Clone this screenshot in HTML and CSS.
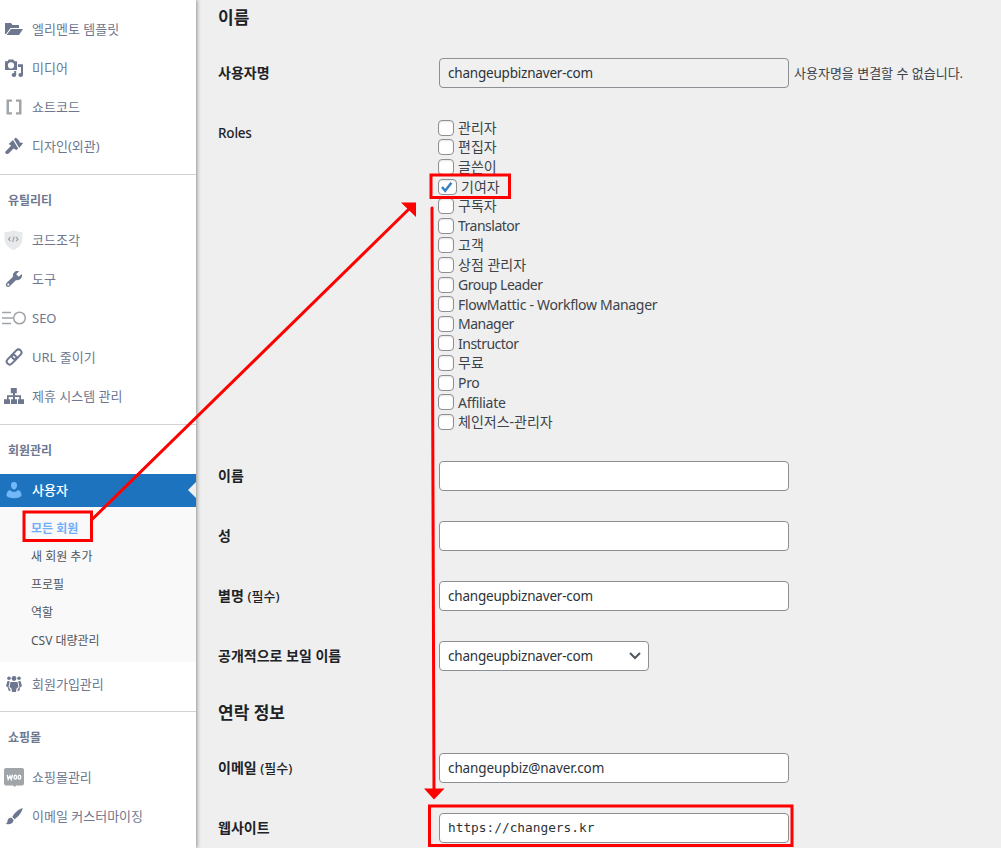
FILE: index.html
```html
<!DOCTYPE html>
<html lang="ko">
<head>
<meta charset="utf-8">
<title>사용자 편집</title>
<link rel="stylesheet" href="styles.css">
</head>
<body>
<div class="app">
  <nav class="sidebar">
    <ul class="menu menu-first">
      <li class="item"><svg class="icon" viewBox="0 0 20 20"><path d="M1 15V4h6l1.500 2H15v3H6.500L2 15zM2.500 16 7 10h12l-4 6z"/></svg><span>엘리멘토 템플릿</span></li>
      <li class="item"><svg class="icon" viewBox="0 0 20 20"><path fill-rule="evenodd" d="M1 3.200h2.500L4.800 1.500h4.400l1.300 1.700H13V12H1zM7 4.300a3.100 3.100 0 1 0 0 6.200 3.100 3.100 0 0 0 0-6.200z"/><path d="M14 6.300h5V17h-2V9h-3zM10.200 13h2v4h-2z"/><ellipse cx="9.900" cy="17" rx="2.300" ry="1.900"/><ellipse cx="16.700" cy="17" rx="2.300" ry="1.900"/></svg><span>미디어</span></li>
      <li class="item"><svg class="icon gray" viewBox="0 0 20 20"><path d="M2.500 2.500H8v2.300H5v10.400h3v2.300H2.500zM17.500 2.500H12v2.300h3v10.400h-3v2.300h5.500z"/></svg><span>쇼트코드</span></li>
      <li class="item"><svg class="icon" viewBox="0 0 20 20"><path d="M10 3.300 11.800 1.500 15 4.600l.8 1.800 3.400.6-4 5zM9 4l5.200 8.500-1.700 1.500-3-1.500-4.800 4.900c-1.500 1.500-4.600 0-3.200-1.800L7.200 9.500 4.700 8z"/></svg><span>디자인(외관)</span></li>
    </ul>
    <section class="group">
      <h3 class="group-title">유틸리티</h3>
      <ul class="menu">
        <li class="item"><svg class="icon shield" viewBox="0 0 20 20"><path fill="#e8e9ea" d="M9.500 0C12 1.500 15 2 18.500 2v7c0 5-4 9-9 11-5-2-9-6-9-11V2C4 2 7 1.500 9.500 0z"/><path class="line thin" d="M6.500 7 4.500 9.200l2 2M12 7l2 2.200-2 2M10.200 6.500l-1.500 5.500"/></svg><span>코드조각</span></li>
        <li class="item"><svg class="icon" viewBox="0 0 20 20"><path d="M16.700 9.800c-1.300 1.300-3 1.600-4.600 1.100L6 17c-1 1.200-2.500 1.200-3.500.3-1-1-1-2.500.2-3.600l6.300-5.900C8.600 6.200 9 4.600 10.100 3.400c1.300-1.300 3.300-1.700 5-1.100l-2.900 2.900 2.500 2.600L17.700 5c.6 1.600.3 3.500-1 4.800zM4.300 14.500a1.100 1.100 0 1 0 0 2.200 1.100 1.100 0 0 0 0-2.200z" fill-rule="evenodd"/></svg><span>도구</span></li>
        <li class="item"><svg class="icon seo" viewBox="0 0 24 16"><path class="line" d="M0 2.500h9M0 8h11M0 13.500h9"/><circle class="line" cx="17.500" cy="8" r="5.800"/></svg><span>SEO</span></li>
        <li class="item"><svg class="icon" viewBox="0 0 20 20"><g fill="none" stroke="#6e7790" stroke-width="2"><rect x="7.200" y="4.300" width="11" height="6" rx="3" transform="rotate(-45 12.700 7.300)"/><rect x="2" y="9.700" width="11" height="6" rx="3" transform="rotate(-45 7.500 12.700)"/></g></svg><span>URL 줄이기</span></li>
        <li class="item"><svg class="icon" viewBox="0 0 20 20"><path d="M6.800 2h6v5.200H11v2.100h6v3.900h3V18h-6v-4.800h1.300v-2.100H11v2.100h2V18H7v-4.800h2v-2.100H4.700v2.100H6V18H0v-4.800h3V9.300h6V7.200H6.800z"/></svg><span>제휴 시스템 관리</span></li>
      </ul>
    </section>
    <section class="group">
      <h3 class="group-title members">회원관리</h3>
      <div class="item active"><svg class="icon" viewBox="0 0 20 20"><path d="M10 2c2.200 0 3.300 1.600 3 3.800C12.700 8 11.500 9.500 10 9.500S7.300 8 7 5.800C6.700 3.600 7.800 2 10 2zM6 10c1 1.300 2.400 2 4 2s3-.7 4-2c2.500.5 3.500 2.500 3.500 6-2 1.500-4.200 2.200-7.500 2.200S4.500 17.500 2.500 16c0-3.500 1-5.500 3.500-6z"/></svg><span>사용자</span></div>
      <ul class="submenu">
        <li class="current">모든 회원</li>
        <li>새 회원 추가</li>
        <li>프로필</li>
        <li>역할</li>
        <li>CSV 대량관리</li>
      </ul>
      <div class="item signup"><svg class="icon" viewBox="0 0 20 20"><circle cx="10" cy="4.500" r="2.400"/><circle cx="5" cy="4.300" r="1.800"/><circle cx="15" cy="4.300" r="1.800"/><path d="M6.500 8h7l1 5-2 1.500-.5 3.500H8l-.5-3.500-2-1.500zM3.500 7l2.300.3L4.500 13l1.700 2.200.3 2-2-.7-.6-3L2 12zM16.500 7l-2.300.3 1.300 5.700-1.700 2.200-.3 2 2-.7.6-3L18 12z"/></svg><span>회원가입관리</span></div>
    </section>
    <section class="group">
      <h3 class="group-title">쇼핑몰</h3>
      <ul class="menu">
        <li class="item"><svg class="icon" viewBox="0 0 20 20"><path fill="#a0a5aa" d="M2 1h16q2 0 2 2v13.500q0 2-2 2h-6L11 20l-2-1.500H2q-2 0-2-2V3q0-2 2-2z"/><g fill="none" stroke="#fff" stroke-width="1.400"><path d="m3.200 7.800 1 4.500L6 9l1.200 3.300L8.500 7.700"/><ellipse cx="11.300" cy="10.200" rx="1.300" ry="1.900"/><ellipse cx="15.400" cy="10.200" rx="1.300" ry="1.900"/></g></svg><span>쇼핑몰관리</span></li>
        <li class="item"><svg class="icon" viewBox="0 0 20 20"><path d="M18.700 2C15 3 10.500 6.500 8.300 11l2.200 2.200C15 10.500 18 6 18.700 2zM7.500 11.700c-2.500-.3-4 1.300-4 3.300 0 1.500-1 2.500-2 3 3.500.5 8 0 8-4.300z"/></svg><span>이메일 커스터마이징</span></li>
      </ul>
    </section>
  </nav>

  <main class="content">
    <h2 class="title">이름</h2>
    <div class="row"><label>사용자명</label><div class="input disabled">changeupbiznaver-com</div><span class="hint">사용자명을 변결할 수 없습니다.</span></div>
    <div class="row roles"><label class="latin">Roles</label>
      <ul class="checks">
        <li><i class="box"></i><span>관리자</span></li>
        <li><i class="box"></i><span>편집자</span></li>
        <li><i class="box"></i><span>글쓴이</span></li>
        <li><i class="box checked"><svg viewBox="0 0 16 14"><path d="m3 7 3.200 3.800 6.200-8"/></svg></i><span>기여자</span></li>
        <li><i class="box"></i><span>구독자</span></li>
        <li class="en tight"><i class="box"></i><span>Translator</span></li>
        <li><i class="box"></i><span>고객</span></li>
        <li><i class="box"></i><span>상점 관리자</span></li>
        <li class="en tight"><i class="box"></i><span>Group Leader</span></li>
        <li class="en"><i class="box"></i><span>FlowMattic - Workflow Manager</span></li>
        <li class="en tight"><i class="box"></i><span>Manager</span></li>
        <li class="en tight"><i class="box"></i><span>Instructor</span></li>
        <li><i class="box"></i><span>무료</span></li>
        <li class="en"><i class="box"></i><span>Pro</span></li>
        <li class="en"><i class="box"></i><span>Affiliate</span></li>
        <li><i class="box"></i><span>체인저스-관리자</span></li>
      </ul>
    </div>
    <div class="row"><label>이름</label><div class="input"></div></div>
    <div class="row"><label>성</label><div class="input"></div></div>
    <div class="row"><label>별명 <small>(필수)</small></label><div class="input">changeupbiznaver-com</div></div>
    <div class="row"><label>공개적으로 보일 이름</label><div class="input select">changeupbiznaver-com<svg class="chevron" viewBox="0 0 12 8"><path d="m1 1 5 5 5-5"/></svg></div></div>
    <h2 class="title contact">연락 정보</h2>
    <div class="row"><label>이메일 <small>(필수)</small></label><div class="input email">changeupbiz@naver.com</div></div>
    <div class="row"><label>웹사이트</label><div class="input code">https://changers.kr</div></div>
  </main>

  <svg class="annotations" viewBox="0 0 1001 848">
    <rect x="24" y="512" width="67.500" height="28.500"/>
    <rect x="431" y="175" width="78.500" height="22.500"/>
    <rect x="429.500" y="806" width="362.500" height="39.500"/>
    <path d="M92 519.500 409 209"/>
    <path d="M432 208 434 790" stroke-linecap="round"/>
    <path class="head" d="M401 202.500h15V217zM424 788.500h20.500L434 799.500z"/>
  </svg>
</div>
</body>
</html>
```
FILE: styles.css
```css
* { box-sizing: border-box; }
body {
  margin: 0;
  overflow: hidden;
  background: #efefef;
  font-family: "Noto Sans", "Noto Sans CJK KR", sans-serif;
  font-size: 13px;
  color: #3c434a;
}
ul { list-style: none; margin: 0; padding: 0; }
h2, h3 { margin: 0; }
.app { position: relative; display: flex; width: 1001px; height: 848px; overflow: hidden; }

.sidebar {
  width: 196px;
  flex: none;
  background: #fff;
  box-shadow: 1px 0 4px rgba(0, 0, 0, .4);
  color: #6e7790;
}
.menu-first { padding-top: 9px; height: 174px; }
.item { display: flex; align-items: center; gap: 8px; height: 39px; padding-left: 4px; white-space: nowrap; line-height: 20px; }
.icon { width: 20px; height: 20px; flex: none; fill: #6e7790; }
.gray { fill: #a0a5aa; }
.line { fill: none; stroke: #a0a5aa; stroke-width: 1.500; }
.thin { stroke-width: 1.200; }
.seo { width: 24px; height: 16px; margin: 0 -2px; }
.group { border-top: 1px solid #d3d3d5; padding-bottom: 9px; }
.group-title { height: 45px; padding: 16px 8px 0; font-size: 12px; line-height: 20px; font-weight: 700; }
.members { height: 49px; }
.active { height: 33px; padding-bottom: 1px; background: #1e73be; color: #fff; font-weight: 500; position: relative; }
.active .icon { fill: #72b8f8; }
.active::after {
  content: "";
  position: absolute;
  right: 0;
  top: 8px;
  border: 8px solid transparent;
  border-right-color: #efefef;
  border-left: 0;
}
.submenu { background: #f9f9f9; padding: 8px 31px 7px; font-size: 12px; line-height: 28px; color: #50555c; }
.submenu .current { color: #72aef8; font-weight: 700; }
.signup { height: 40px; padding-top: 3px; }

.content { flex: 1; padding-left: 22px; }
.title { height: 43px; font-size: 17px; line-height: 36px; color: #1d2327; }
.contact { height: 52px; line-height: 54px; }
.row { display: flex; align-items: center; height: 60px; white-space: nowrap; }
.row label { width: 221px; flex: none; font-size: 14px; line-height: 20px; font-weight: 700; color: #1d2327; }
.row label small { font-size: 13px; font-weight: 500; }
.row .latin { font-size: 13.500px; font-weight: 500; letter-spacing: -.2px; }
.input {
  width: 350px;
  height: 30px;
  padding: 0 8px;
  border: 1px solid #8c8f94;
  border-radius: 4px;
  background: #fff;
  font-size: 13.500px;
  letter-spacing: -.2px;
  line-height: 28px;
  color: #2c3338;
}
.email { letter-spacing: -.1px; }
.disabled { background: #f0f0f0; }
.select { width: 210px; display: flex; align-items: center; justify-content: space-between; padding-right: 7px; }
.chevron { width: 12px; height: 8px; fill: none; stroke: #50575e; stroke-width: 2; }
.code { font-family: "DejaVu Sans Mono", monospace; font-size: 12.800px; letter-spacing: 0; }
.hint { margin-left: 5px; line-height: 18px; padding-bottom: 1px; }
.roles { align-items: flex-start; height: 343px; padding-top: 15px; }
.roles .latin { margin-top: 5px; }
.checks { margin-left: -1px; font-size: 14px; }
.checks li { display: flex; align-items: center; gap: 4px; height: 19.600px; line-height: 19px; }
.checks span { padding-bottom: 1px; }
.checks .en { letter-spacing: -.3px; }
.checks .tight { letter-spacing: -.5px; }
.checks .en span { padding-bottom: 0; }
.box { width: 16px; height: 16px; border: 1px solid #8c8f94; border-radius: 4px; background: #fff; box-shadow: inset 0 1px 2px rgba(0, 0, 0, .1); }
.checked { width: 19px; display: flex; }
.checked svg { width: 16px; height: 14px; fill: none; stroke: #3582c4; stroke-width: 2.500; }

.annotations { position: absolute; left: 0; top: 0; width: 1001px; height: 848px; fill: none; stroke: #fe0000; stroke-width: 3; pointer-events: none; }
.annotations .head { fill: #fe0000; stroke: none; }
```
